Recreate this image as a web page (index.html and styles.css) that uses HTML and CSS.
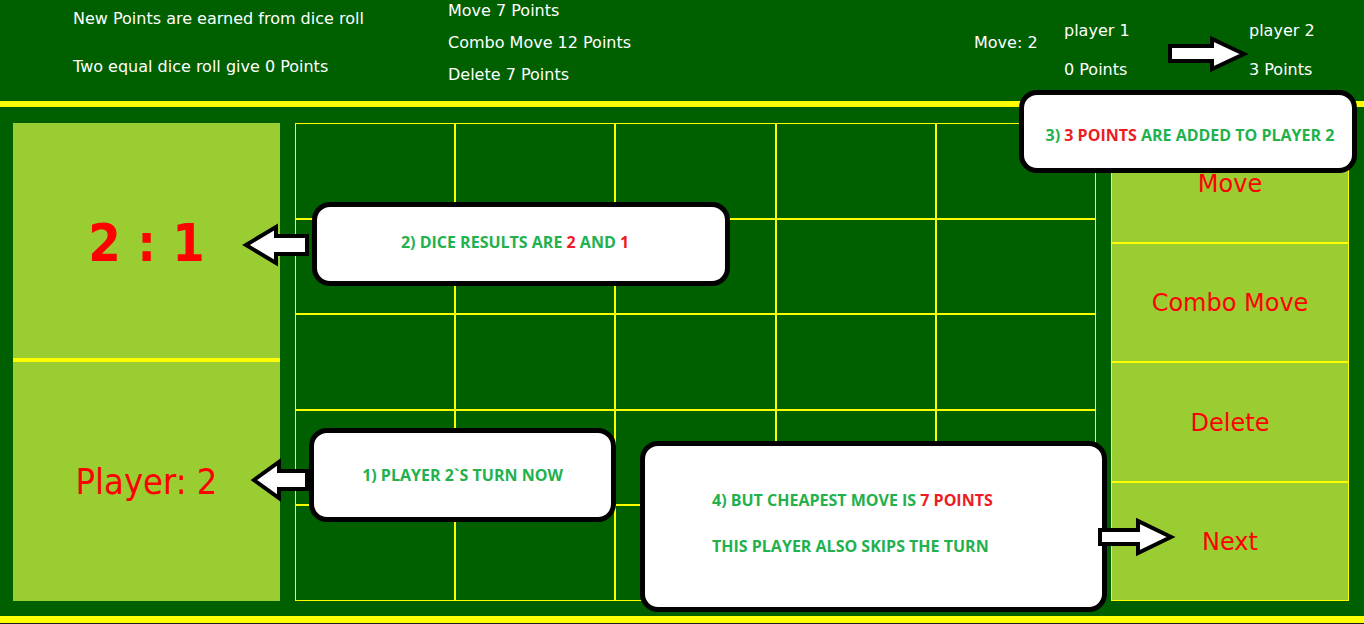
FILE: index.html
```html
<!DOCTYPE html>
<html lang="en">
<head>
<meta charset="utf-8">
<title>Dice Game</title>
<link rel="stylesheet" href="styles.css">
</head>
<body>
<div class="app">
  <header class="top">
    <div class="rules">
      <p>New Points are earned from dice roll</p>
      <p>Two equal dice roll give 0 Points</p>
    </div>
    <div class="costs">
      <p>Move 7 Points</p>
      <p>Combo Move 12 Points</p>
      <p>Delete 7 Points</p>
    </div>
    <div class="move-count">Move: 2</div>
    <div class="player">
      <p>player 1</p>
      <p>0 Points</p>
    </div>
    <svg class="turn-arrow" width="81" height="38" viewBox="0 0 81 38">
      <polygon points="3,11 45,11 45,4 77,19 45,34 45,26 3,26" fill="#fff" stroke="#000" stroke-width="4" stroke-linejoin="miter"/>
    </svg>
    <div class="player player-two">
      <p>player 2</p>
      <p>3 Points</p>
    </div>
  </header>

  <main class="board">
    <section class="side">
      <div class="dice">2 : 1</div>
      <div class="current">Player: 2</div>
    </section>
    <div class="grid">
      <div class="cell"></div><div class="cell"></div><div class="cell"></div><div class="cell"></div><div class="cell"></div>
      <div class="cell"></div><div class="cell"></div><div class="cell"></div><div class="cell"></div><div class="cell"></div>
      <div class="cell"></div><div class="cell"></div><div class="cell"></div><div class="cell"></div><div class="cell"></div>
      <div class="cell"></div><div class="cell"></div><div class="cell"></div><div class="cell"></div><div class="cell"></div>
      <div class="cell"></div><div class="cell"></div><div class="cell"></div><div class="cell"></div><div class="cell"></div>
    </div>
    <nav class="actions">
      <div class="action">Move</div>
      <div class="action">Combo Move</div>
      <div class="action">Delete</div>
      <div class="action">Next</div>
    </nav>
  </main>

  <footer class="bottom-bar"></footer>

  <svg class="pointers" width="1364" height="624" viewBox="0 0 1364 624">
    <polygon points="254,480 279,462 279,471 307,471 307,489 279,489 279,498" fill="#fff" stroke="#000" stroke-width="4"/>
    <polygon points="246,245 276,227 276,236 307,236 307,254 276,254 276,263" fill="#fff" stroke="#000" stroke-width="4"/>
  </svg>

  <div class="callout c1"><span class="g">1) PLAYER 2`S TURN NOW</span></div>
  <div class="callout c2"><span class="g">2) DICE RESULTS ARE <span class="r">2</span> AND <span class="r">1</span></span></div>
  <div class="callout c3"><span class="g">3) <span class="r">3 POINTS</span> ARE ADDED TO PLAYER 2</span></div>
  <div class="callout c4">
    <p class="g">4) BUT CHEAPEST MOVE IS <span class="r">7 POINTS</span></p>
    <p class="g">THIS PLAYER ALSO SKIPS THE TURN</p>
  </div>

  <svg class="pointers top-layer" width="1364" height="624" viewBox="0 0 1364 624">
    <polygon points="1100,530 1138,530 1138,521 1171,537 1138,553 1138,544 1100,544" fill="#fff" stroke="#000" stroke-width="4"/>
  </svg>
</div>
</body>
</html>
```
FILE: styles.css
```css
html, body {
  margin: 0;
  padding: 0;
  background: #1e1e1e;
}

.app {
  position: relative;
  width: 1364px;
  height: 624px;
  overflow: hidden;
}

p { margin: 0; }

.top {
  height: 101px;
  border-bottom: 6px solid #ffff00;
  background: #006000;
  display: flex;
  align-items: flex-start;
  color: #ffffff;
  font-family: "DejaVu Sans", sans-serif;
  font-size: 16px;
  line-height: 20px;
}

.rules {
  margin-left: 73px;
  width: 375px;
  padding-top: 9px;
  display: flex;
  flex-direction: column;
  gap: 28px;
}

.costs {
  width: 526px;
  padding-top: 1px;
  display: flex;
  flex-direction: column;
  gap: 12px;
}

.move-count {
  width: 90px;
  padding-top: 33px;
}

.player {
  width: 103px;
  padding-top: 21px;
  display: flex;
  flex-direction: column;
  gap: 19px;
}

.turn-arrow {
  margin-top: 35px;
  flex: none;
}

.player-two {
  margin-left: 1px;
}

.board {
  height: 478px;
  padding: 16px 15px 15px 13px;
  background: #006000;
  display: flex;
  gap: 15px;
}

.side {
  width: 267px;
  flex: none;
  background: #9acd32;
  display: flex;
  flex-direction: column;
  color: #ff0000;
  font-family: "DejaVu Sans Condensed", "DejaVu Sans", sans-serif;
  font-stretch: semi-condensed;
}

.dice {
  box-sizing: border-box;
  height: 239px;
  border-bottom: 4px solid #ffff00;
  display: flex;
  align-items: center;
  justify-content: center;
  font-size: 52px;
  font-weight: bold;
  padding-top: 4px;
}

.current {
  flex: 1;
  display: flex;
  align-items: center;
  justify-content: center;
  font-size: 36px;
}

.grid {
  width: 801px;
  flex: none;
  display: grid;
  grid-template-columns: repeat(5, 1fr);
  grid-template-rows: repeat(5, 1fr);
}

.cell {
  border: 1px solid #ffff00;
}

.actions {
  width: 238px;
  flex: none;
  display: flex;
  flex-direction: column;
}

.action {
  flex: 1;
  border: 1px solid #ffff00;
  background: #9acd32;
  color: #ff0000;
  display: flex;
  align-items: center;
  justify-content: center;
  font-family: "DejaVu Sans", sans-serif;
  font-size: 24px;
  padding-top: 2px;
}

.bottom-bar {
  height: 7px;
  background: #ffff00;
}

.pointers {
  position: absolute;
  left: 0;
  top: 0;
  pointer-events: none;
}

.top-layer {
  z-index: 2;
}

.callout {
  position: absolute;
  box-sizing: border-box;
  background: #ffffff;
  border: 5px solid #000000;
  border-radius: 18px;
  font-family: "Open Sans", sans-serif;
  font-weight: bold;
  font-size: 16px;
  line-height: 22px;
  display: flex;
  align-items: center;
  justify-content: center;
}

.g { color: #22b14c; }
.r { color: #ed1c24; }

.c1 {
  left: 309px;
  top: 428px;
  width: 307px;
  height: 94px;
}

.c2 {
  left: 312px;
  top: 202px;
  width: 418px;
  height: 84px;
  padding-right: 12px;
  padding-bottom: 4px;
}

.c3 {
  left: 1019px;
  top: 90px;
  width: 338px;
  height: 83px;
  padding-top: 6px;
  padding-left: 4px;
}

.c4 {
  left: 640px;
  top: 441px;
  width: 467px;
  height: 171px;
  display: flex;
  flex-direction: column;
  align-items: flex-start;
  justify-content: flex-start;
  padding: 43px 0 0 67px;
  gap: 24px;
}
```
